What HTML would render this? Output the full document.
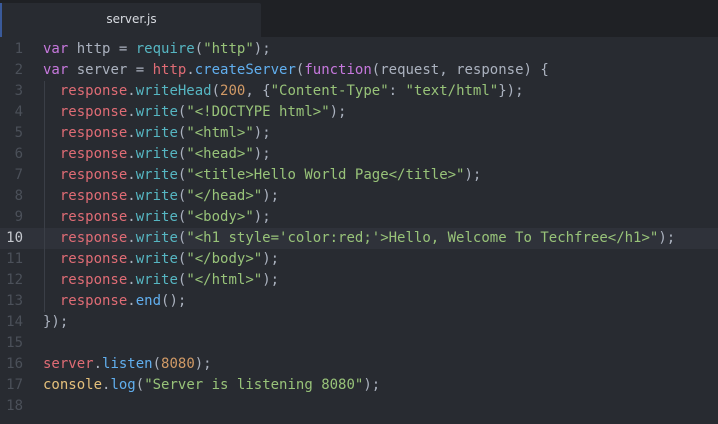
<!DOCTYPE html>
<html><head><meta charset="utf-8"><style>
body{margin:0;width:718px;height:424px;background:#282b31;overflow:hidden;font-family:"DejaVu Sans Mono","Liberation Mono",monospace;}
.bar{position:absolute;left:0;top:0;width:718px;height:37px;background:#1f2125;}
.tab{position:absolute;left:0;top:3px;width:261px;height:34px;background:#282b31;border-left:2px solid #3a5a9a;box-sizing:border-box;border-top-right-radius:2px;color:#d7dae0;font:12px "DejaVu Sans","Liberation Sans",sans-serif;text-align:center;line-height:32px;}
.ed{position:absolute;left:0;top:39px;width:718px;}
.l{position:relative;height:21px;line-height:21px;font-size:14px;white-space:pre;color:#abb2bf;}
.l.hl{background:#2f323a;}
.n{position:absolute;left:0;width:23px;text-align:right;color:#4b5059;}
.hl .n{color:#c5c8ce;}
.c{position:absolute;left:43px;}
.g{position:absolute;left:44px;top:0;width:1px;height:21px;background:#3b3f47;}
.k{color:#c678dd}.f{color:#61afef}.r{color:#56b6c2}.s{color:#98c379}.o{color:#d19a66}.v{color:#e06c75}.y{color:#e5c07b}
</style></head><body>
<div class="bar"><div class="tab">server.js</div></div>
<div class="ed">
<div class="l"><span class="n">1</span><span class="c"><span class="k">var</span> http = <span class="r">require</span>(<span class="s">"http"</span>);</span></div>
<div class="l"><span class="n">2</span><span class="c"><span class="k">var</span> server = <span class="v">http</span>.<span class="f">createServer</span>(<span class="k">function</span>(request, response) {</span></div>
<div class="l"><span class="n">3</span><span class="g"></span><span class="c">  <span class="v">response</span>.<span class="r">writeHead</span>(<span class="o">200</span>, {<span class="s">"Content-Type"</span>: <span class="s">"text/html"</span>});</span></div>
<div class="l"><span class="n">4</span><span class="g"></span><span class="c">  <span class="v">response</span>.<span class="r">write</span>(<span class="s">"&lt;!DOCTYPE html&gt;"</span>);</span></div>
<div class="l"><span class="n">5</span><span class="g"></span><span class="c">  <span class="v">response</span>.<span class="r">write</span>(<span class="s">"&lt;html&gt;"</span>);</span></div>
<div class="l"><span class="n">6</span><span class="g"></span><span class="c">  <span class="v">response</span>.<span class="r">write</span>(<span class="s">"&lt;head&gt;"</span>);</span></div>
<div class="l"><span class="n">7</span><span class="g"></span><span class="c">  <span class="v">response</span>.<span class="r">write</span>(<span class="s">"&lt;title&gt;Hello World Page&lt;/title&gt;"</span>);</span></div>
<div class="l"><span class="n">8</span><span class="g"></span><span class="c">  <span class="v">response</span>.<span class="r">write</span>(<span class="s">"&lt;/head&gt;"</span>);</span></div>
<div class="l"><span class="n">9</span><span class="g"></span><span class="c">  <span class="v">response</span>.<span class="r">write</span>(<span class="s">"&lt;body&gt;"</span>);</span></div>
<div class="l hl"><span class="n">10</span><span class="g"></span><span class="c">  <span class="v">response</span>.<span class="r">write</span>(<span class="s">"&lt;h1 style='color:red;'&gt;Hello, Welcome To Techfree&lt;/h1&gt;"</span>);</span></div>
<div class="l"><span class="n">11</span><span class="g"></span><span class="c">  <span class="v">response</span>.<span class="r">write</span>(<span class="s">"&lt;/body&gt;"</span>);</span></div>
<div class="l"><span class="n">12</span><span class="g"></span><span class="c">  <span class="v">response</span>.<span class="r">write</span>(<span class="s">"&lt;/html&gt;"</span>);</span></div>
<div class="l"><span class="n">13</span><span class="g"></span><span class="c">  <span class="v">response</span>.<span class="f">end</span>();</span></div>
<div class="l"><span class="n">14</span><span class="c">});</span></div>
<div class="l"><span class="n">15</span></div>
<div class="l"><span class="n">16</span><span class="c"><span class="v">server</span>.<span class="f">listen</span>(<span class="o">8080</span>);</span></div>
<div class="l"><span class="n">17</span><span class="c"><span class="y">console</span>.<span class="f">log</span>(<span class="s">"Server is listening 8080"</span>);</span></div>
<div class="l"><span class="n">18</span></div>
</div>
</body></html>
